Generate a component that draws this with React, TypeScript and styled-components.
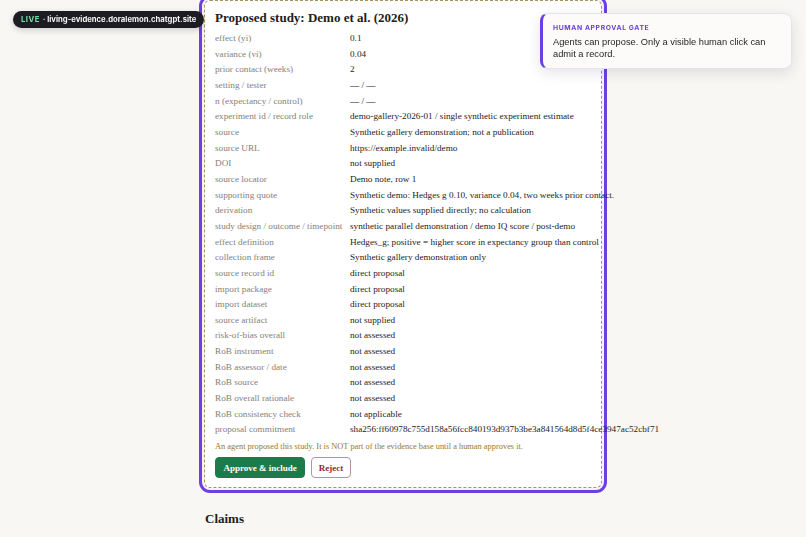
import React from 'react';
import styled, { createGlobalStyle } from 'styled-components';

const serif = `"Liberation Serif", "DejaVu Serif", serif`;
const sans = `Inter, "Liberation Sans", Arial, sans-serif`;
const helvetica = `"Liberation Sans", Arial, sans-serif`;

const GlobalStyle = createGlobalStyle`
  html, body {
    margin: 0;
    padding: 0;
    background: #f8f7f3;
    overflow: hidden;
  }
  body {
    font-family: ${serif};
    color: #2a2622;
  }
`;

const Page = styled.div`
  min-height: 537px;
  background: #f8f7f3;
`;

const Column = styled.main`
  width: 408px;
  margin: -5px auto 0;
`;

const Card = styled.section`
  border: 3px solid #6b3fe4;
  border-radius: 11px;
  padding: 2px;
  background: #f6f1ff;
`;

const Proposal = styled.div`
  border: 1.5px dashed #a8935e;
  border-radius: 6px;
  background: #fff;
  padding: 8px 9px 9px 10px;
`;

const Title = styled.h3`
  margin: 0 0 4px;
  font-family: ${serif};
  font-size: 13px;
  font-weight: 700;
  line-height: 18px;
  color: #1f1c19;
`;

const Fields = styled.dl`
  display: grid;
  grid-template-columns: 135px 1fr;
  margin: 0;
  font-size: 9.2px;
  line-height: 15.66px;
`;

const Label = styled.dt`
  color: #85807a;
  white-space: nowrap;
`;

const Value = styled.dd`
  margin: 0;
  color: #26221e;
  white-space: nowrap;
`;

const Warning = styled.p`
  margin: 2px 0 4px;
  font-size: 8.4px;
  line-height: 13px;
  color: #96791e;
`;

const Actions = styled.div`
  display: flex;
  gap: 6px;
`;

const Button = styled.button<{ $primary?: boolean }>`
  height: 21px;
  padding: 0 ${({ $primary }) => ($primary ? '7.5px' : '6.5px')};
  border-radius: 4px;
  font-family: ${serif};
  font-size: 9px;
  font-weight: 700;
  cursor: pointer;
  border: 1px solid ${({ $primary }) => ($primary ? '#1d7a4b' : '#b8919a')};
  background: ${({ $primary }) => ($primary ? '#1d7a4b' : '#fff')};
  color: ${({ $primary }) => ($primary ? '#fff' : '#8b2830')};
`;

const SectionTitle = styled.h2`
  margin: 18px 0 0 6px;
  font-family: ${serif};
  font-size: 13px;
  font-weight: 700;
  color: #1f1c19;
`;

const LiveBadge = styled.div`
  position: fixed;
  top: 11px;
  left: 13px;
  height: 17px;
  padding: 0 8px;
  display: flex;
  align-items: center;
  gap: 3px;
  border-radius: 9px;
  background: #1d1c22;
  box-shadow: 0 2px 6px rgba(0, 0, 0, 0.18);
  font-family: ${sans};
  font-size: 7.7px;
  font-weight: 700;
  color: #f4f4f4;
  white-space: nowrap;
`;

const LiveTag = styled.span`
  color: #74e0a6;
  letter-spacing: 0.06em;
`;

const Gate = styled.aside`
  position: fixed;
  top: 13px;
  right: 14px;
  width: 228px;
  padding: 9px 10px 8px 10px;
  border: 1px solid #e7e3ee;
  border-left: 3px solid #6b3fe4;
  border-radius: 8px;
  background: #fcfbf9;
  box-shadow: 0 4px 14px rgba(40, 30, 70, 0.12);
  font-family: ${sans};
`;

const GateTitle = styled.div`
  font-size: 6.8px;
  font-weight: 700;
  letter-spacing: 0.09em;
  color: #6b3fd6;
  margin-bottom: 4px;
`;

const GateText = styled.div`
  font-family: ${helvetica};
  font-size: 9.3px;
  line-height: 12px;
  color: #1f1f22;
`;

const fields: [string, string][] = [
  ['effect (yi)', '0.1'],
  ['variance (vi)', '0.04'],
  ['prior contact (weeks)', '2'],
  ['setting / tester', '— / —'],
  ['n (expectancy / control)', '— / —'],
  ['experiment id / record role', 'demo-gallery-2026-01 / single synthetic experiment estimate'],
  ['source', 'Synthetic gallery demonstration; not a publication'],
  ['source URL', 'https://example.invalid/demo'],
  ['DOI', 'not supplied'],
  ['source locator', 'Demo note, row 1'],
  ['supporting quote', 'Synthetic demo: Hedges g 0.10, variance 0.04, two weeks prior contact.'],
  ['derivation', 'Synthetic values supplied directly; no calculation'],
  ['study design / outcome / timepoint', 'synthetic parallel demonstration / demo IQ score / post-demo'],
  ['effect definition', 'Hedges_g; positive = higher score in expectancy group than control'],
  ['collection frame', 'Synthetic gallery demonstration only'],
  ['source record id', 'direct proposal'],
  ['import package', 'direct proposal'],
  ['import dataset', 'direct proposal'],
  ['source artifact', 'not supplied'],
  ['risk-of-bias overall', 'not assessed'],
  ['RoB instrument', 'not assessed'],
  ['RoB assessor / date', 'not assessed'],
  ['RoB source', 'not assessed'],
  ['RoB overall rationale', 'not assessed'],
  ['RoB consistency check', 'not applicable'],
  ['proposal commitment', 'sha256:ff60978c755d158a56fcc840193d937b3be3a841564d8d5f4ce3947ac52cbf71'],
];

export default function App() {
  return (
    <Page>
      <GlobalStyle />
      <Column>
        <Card>
          <Proposal>
            <Title>Proposed study: Demo et al. (2026)</Title>
            <Fields>
              {fields.map(([label, value]) => (
                <React.Fragment key={label}>
                  <Label>{label}</Label>
                  <Value>{value}</Value>
                </React.Fragment>
              ))}
            </Fields>
            <Warning>
              An agent proposed this study. It is NOT part of the evidence base until a human approves it.
            </Warning>
            <Actions>
              <Button $primary>Approve &amp; include</Button>
              <Button>Reject</Button>
            </Actions>
          </Proposal>
        </Card>
        <SectionTitle>Claims</SectionTitle>
      </Column>
      <LiveBadge>
        <LiveTag>LIVE</LiveTag>
        <span>· living-evidence.doralemon.chatgpt.site</span>
      </LiveBadge>
      <Gate>
        <GateTitle>HUMAN APPROVAL GATE</GateTitle>
        <GateText>Agents can propose. Only a visible human click can admit a record.</GateText>
      </Gate>
    </Page>
  );
}
